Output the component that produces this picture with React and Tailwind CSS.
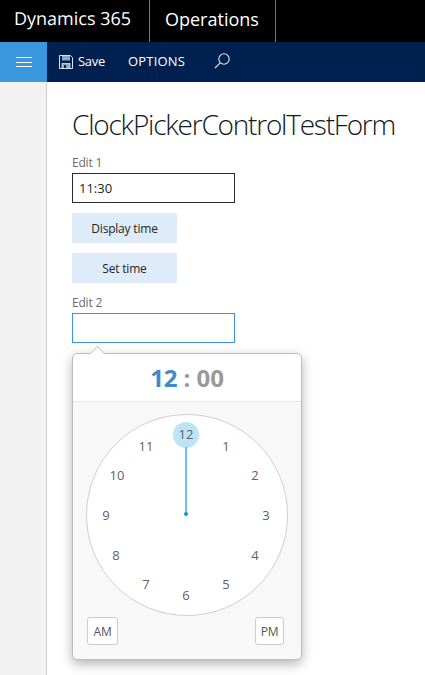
const font = { fontFamily: '"Open Sans", "Noto Sans", sans-serif' };

const numbers = [
  { n: 12, x: 100, y: 20 },
  { n: 1, x: 140, y: 32 },
  { n: 2, x: 169, y: 61 },
  { n: 3, x: 180, y: 101 },
  { n: 4, x: 169, y: 141 },
  { n: 5, x: 140, y: 170 },
  { n: 6, x: 100, y: 181 },
  { n: 7, x: 60, y: 170 },
  { n: 8, x: 30, y: 141 },
  { n: 9, x: 20, y: 101 },
  { n: 10, x: 31, y: 61 },
  { n: 11, x: 60, y: 32 },
];

const SaveIcon = () => (
  <svg width="14" height="14" viewBox="0 0 14 14" fill="none">
    <path d="M0.5 0.5H11.5L13.5 2.5V13.5H0.5Z" stroke="#dbe6f2" />
    <rect x="3" y="1" width="8" height="4.5" fill="#8fa6c4" />
    <rect x="3" y="8.5" width="8" height="5" fill="#8fa6c4" stroke="#dbe6f2" strokeWidth="0.8" />
    <rect x="5" y="10" width="2" height="3" fill="#002050" />
  </svg>
);

const SearchIcon = () => (
  <svg width="16" height="16" viewBox="0 0 16 16" fill="none" stroke="#dce6f2" strokeWidth="1.1">
    <circle cx="10" cy="6" r="5.2" />
    <path d="M6.2 9.8L1 15" />
  </svg>
);

const Clock = () => (
  <div className="relative w-[202px] h-[202px] rounded-full bg-white border border-[#cfcfcf]">
    <div className="absolute left-[86px] top-[7px] w-[26px] h-[26px] rounded-full bg-[#bde3f6]" />
    <div className="absolute left-[98px] top-[32px] w-[2px] h-[68px] bg-[#6cc2ee]" />
    <div className="absolute left-[97px] top-[97px] w-[4px] h-[4px] rounded-full bg-[#0a97dc]" />
    {numbers.map(d => (
      <span
        key={d.n}
        className="absolute w-[30px] h-[20px] -ml-[15px] -mt-[10px] text-center text-[13px] leading-[20px] text-[#5f5f5f]"
        style={{ left: d.x - 1, top: d.y - 1 }}
      >
        {d.n}
      </span>
    ))}
  </div>
);

export default function App() {
  return (
    <div className="w-[425px] h-[675px] overflow-hidden bg-white flex flex-col" style={font}>
      <div className="h-[42px] bg-black text-white flex text-[18px] shrink-0">
        <div className="w-[150px] border-r border-[#777] pl-[14px] leading-[38px] [text-rendering:geometricPrecision]">Dynamics 365</div>
        <div className="w-[126px] border-r border-[#777] pl-[15px] leading-[38px]">Operations</div>
      </div>
      <div className="h-[40px] bg-[#002050] text-white flex items-center shrink-0">
        <div className="w-[47px] h-full bg-[#3a96dd] flex flex-col items-center justify-center gap-[3.5px]">
          <div className="w-[16px] h-[1px] bg-white" />
          <div className="w-[16px] h-[1px] bg-white" />
          <div className="w-[16px] h-[1px] bg-white" />
        </div>
        <div className="ml-[12px] -mt-[1px]"><SaveIcon /></div>
        <span className="ml-[5px] text-[13px] tracking-[-0.3px] -mt-[1px]">Save</span>
        <span className="ml-[23px] text-[13px] tracking-[0.2px]">OPTIONS</span>
        <div className="ml-[29px] -mt-[2px]"><SearchIcon /></div>
      </div>
      <div className="flex flex-1">
        <div className="w-[47px] bg-[#f2f2f2] border-r border-[#cccccc] shrink-0" />
        <div className="pl-[25px] flex flex-col items-start">
          <h1 className="mt-[22px] h-[40px] text-[28px] leading-[40px] font-light text-[#111827] tracking-[-1.22px] whitespace-nowrap">ClockPickerControlTestForm</h1>
          <label className="mt-[9px] h-[20px] text-[12px] leading-[20px] text-[#6b6b6b] tracking-[-0.2px]">Edit 1</label>
          <div className="w-[163px] h-[30px] border border-[#2b2b2b] pl-[6px] text-[13px] leading-[28px] text-[#222]">11:30</div>
          <button className="mt-[10px] w-[105px] h-[30px] pt-[1px] bg-[#deebf8] text-[12px] font-medium text-[#262626] tracking-[-0.2px]">Display time</button>
          <button className="mt-[10px] w-[105px] h-[30px] pt-[1px] bg-[#deebf8] text-[12px] font-medium text-[#262626] tracking-[-0.2px]">Set time</button>
          <label className="mt-[10px] h-[20px] text-[12px] leading-[20px] text-[#6b6b6b] tracking-[-0.2px]">Edit 2</label>
          <div className="w-[163px] h-[30px] border border-[#3a96dd]" />
          <div className="relative mt-[10px] w-[230px] h-[307px] rounded-[5px] border border-[#bdbdbd] bg-[#f8f8f8] shadow-[0_4px_12px_rgba(0,0,0,0.3)] flex flex-col">
            <div className="absolute left-[19px] -top-[6px] w-[11px] h-[11px] rotate-45 bg-white border-l border-t border-[#c8c8c8]" />
            <div className="relative h-[48px] bg-white rounded-t-[5px] border-b border-[#e6e6e6] flex items-center justify-center text-[24px] font-bold text-[#999]">
              <span className="text-[#428bca]">12</span>
              <span className="mx-[6px]">:</span>
              <span>00</span>
            </div>
            <div className="pl-[13px] pt-[12px]"><Clock /></div>
            <div className="flex justify-between pl-[14px] pr-[17px] mt-[1px]">
              <button className="w-[31px] h-[28px] pt-[1px] rounded-[3px] bg-white border border-[#ccc] text-[12px] text-[#555] tracking-[-0.3px]">AM</button>
              <button className="w-[29px] h-[28px] pt-[1px] rounded-[3px] bg-white border border-[#ccc] text-[12px] text-[#555] tracking-[-0.3px]">PM</button>
            </div>
          </div>
        </div>
      </div>
    </div>
  );
}
